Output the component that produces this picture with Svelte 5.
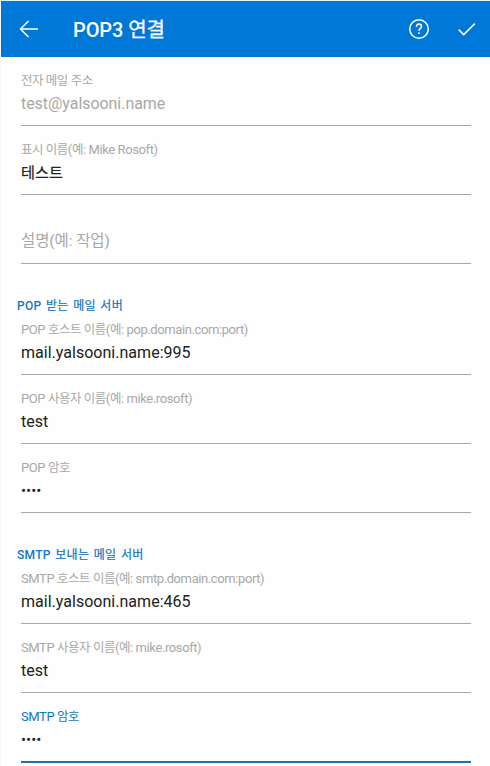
<script lang="ts">
  type Field = {
    label: string;
    value?: string;
    state?: "disabled" | "focused";
    secret?: boolean;
  };

  type Section = {
    title?: string;
    fields: Field[];
  };

  const sections: Section[] = [
    {
      fields: [
        { label: "전자 메일 주소", value: "test@yalsooni.name", state: "disabled" },
        { label: "표시 이름(예: Mike Rosoft)", value: "테스트" },
        { label: "설명(예: 작업)" },
      ],
    },
    {
      title: "POP 받는 메일 서버",
      fields: [
        { label: "POP 호스트 이름(예: pop.domain.com:port)", value: "mail.yalsooni.name:995" },
        { label: "POP 사용자 이름(예: mike.rosoft)", value: "test" },
        { label: "POP 암호", value: "••••", secret: true },
      ],
    },
    {
      title: "SMTP 보내는 메일 서버",
      fields: [
        { label: "SMTP 호스트 이름(예: smtp.domain.com:port)", value: "mail.yalsooni.name:465" },
        { label: "SMTP 사용자 이름(예: mike.rosoft)", value: "test" },
        { label: "SMTP 암호", value: "••••", secret: true, state: "focused" },
      ],
    },
  ];

  const HANGUL = /([가-힣]+)/;

  // odd entries are the Hangul runs
  function splitRuns(text: string) {
    return text.split(HANGUL);
  }
</script>

{#snippet mixed(text: string)}{#each splitRuns(text) as run, i}{#if i % 2}<span class="hangul">{run}</span>{:else}{run}{/if}{/each}{/snippet}

<div class="screen">
  <header class="toolbar">
    <button class="icon-button" aria-label="뒤로">
      <svg width="20" height="18" viewBox="0 0 20 18">
        <path d="M19 9H1.5M9.5 1L1.5 9l8 8" />
      </svg>
    </button>
    <h1>{@render mixed("POP3 연결")}</h1>
    <button class="icon-button help" aria-label="도움말">
      <svg width="22" height="22" viewBox="0 0 22 22">
        <circle cx="11" cy="11" r="9.3" />
        <path d="M8.5 8.8C8.5 7 9.5 6.1 11 6.1s2.5 1 2.5 2.4c0 1.9-2.5 2-2.5 4.3M11 14.2v1.7" />
      </svg>
    </button>
    <button class="icon-button" aria-label="완료">
      <svg width="18" height="14" viewBox="0 0 18 14">
        <path d="M.7 7.6l5 5L16.8 1.6" />
      </svg>
    </button>
  </header>

  <main>
    {#each sections as section}
      <section>
        {#if section.title}
          <h2>{@render mixed(section.title)}</h2>
        {/if}
        {#each section.fields as field}
          <div class="field {field.state ?? ''}" class:empty={!field.value}>
            <div class="label">{@render mixed(field.label)}</div>
            {#if field.value}
              <div class="value" class:secret={field.secret}>{@render mixed(field.value)}</div>
            {/if}
          </div>
        {/each}
      </section>
    {/each}
  </main>
</div>

<style>
  :global(body) {
    margin: 0;
    background: #fff;
  }

  .screen {
    box-sizing: border-box;
    height: 766px;
    overflow: hidden;
    border-top: 1px solid #d9f6fb;
    border-left: 1px solid #f5f5f5;
    background: #fefefe;
    font-family: Roboto, "Noto Sans CJK KR", sans-serif;
    white-space: nowrap;
  }

  .toolbar {
    display: flex;
    align-items: center;
    box-sizing: border-box;
    height: 56px;
    padding: 0 14px 0 18px;
    background: #0078d7;
    color: #fff;
  }

  h1 {
    flex: 1;
    margin: 0 0 0 34px;
    padding-top: 2px;
    font-size: 20px;
    font-weight: 500;
    line-height: 28px;
    letter-spacing: -0.1px;
  }

  h1 .hangul {
    font-weight: 400;
    -webkit-text-stroke: 0.3px currentColor;
  }

  .icon-button {
    display: flex;
    padding: 0;
    border: 0;
    background: none;
    color: inherit;
  }

  .help {
    margin-right: 28px;
  }

  svg {
    fill: none;
    stroke: currentColor;
    stroke-width: 1.5;
  }

  h2 {
    box-sizing: border-box;
    height: 42px;
    margin: 0;
    padding: 33px 0 0 16px;
    color: #0f76c4;
    font-size: 12px;
    font-weight: 500;
    line-height: 18px;
    letter-spacing: 0.3px;
    word-spacing: 1.2px;
  }

  h2 .hangul {
    font-weight: 400;
    -webkit-text-stroke: 0.2px currentColor;
  }

  .field {
    display: flex;
    flex-direction: column;
    box-sizing: border-box;
    height: 69px;
    margin: 0 19px 0 20px;
    padding-top: 14px;
    border-bottom: 1px solid #a6a6a6;
    color: #212121;
  }

  .label {
    height: 21px;
    color: #a8a8a8;
    font-size: 13px;
    line-height: 20px;
    letter-spacing: -0.4px;
  }

  .label .hangul {
    font-size: 12.5px;
    letter-spacing: -0.5px;
  }

  .value {
    height: 24px;
    font-size: 16px;
    line-height: 24px;
    letter-spacing: 0.02px;
  }

  .value .hangul {
    font-size: 15.2px;
    -webkit-text-stroke: 0.2px currentColor;
  }

  .secret {
    font-size: 15px;
  }

  .disabled .value {
    color: #a8a8a8;
    letter-spacing: -0.05px;
  }

  .focused {
    height: 70px;
    border-bottom: 2px solid #2273ad;
  }

  .focused .label {
    color: #0f76c4;
  }

  .empty {
    padding-top: 34px;
  }

  .empty .label {
    height: 24px;
    font-size: 15.5px;
    line-height: 24px;
    letter-spacing: -0.1px;
  }

  .empty .hangul {
    font-size: inherit;
    letter-spacing: inherit;
  }
</style>
